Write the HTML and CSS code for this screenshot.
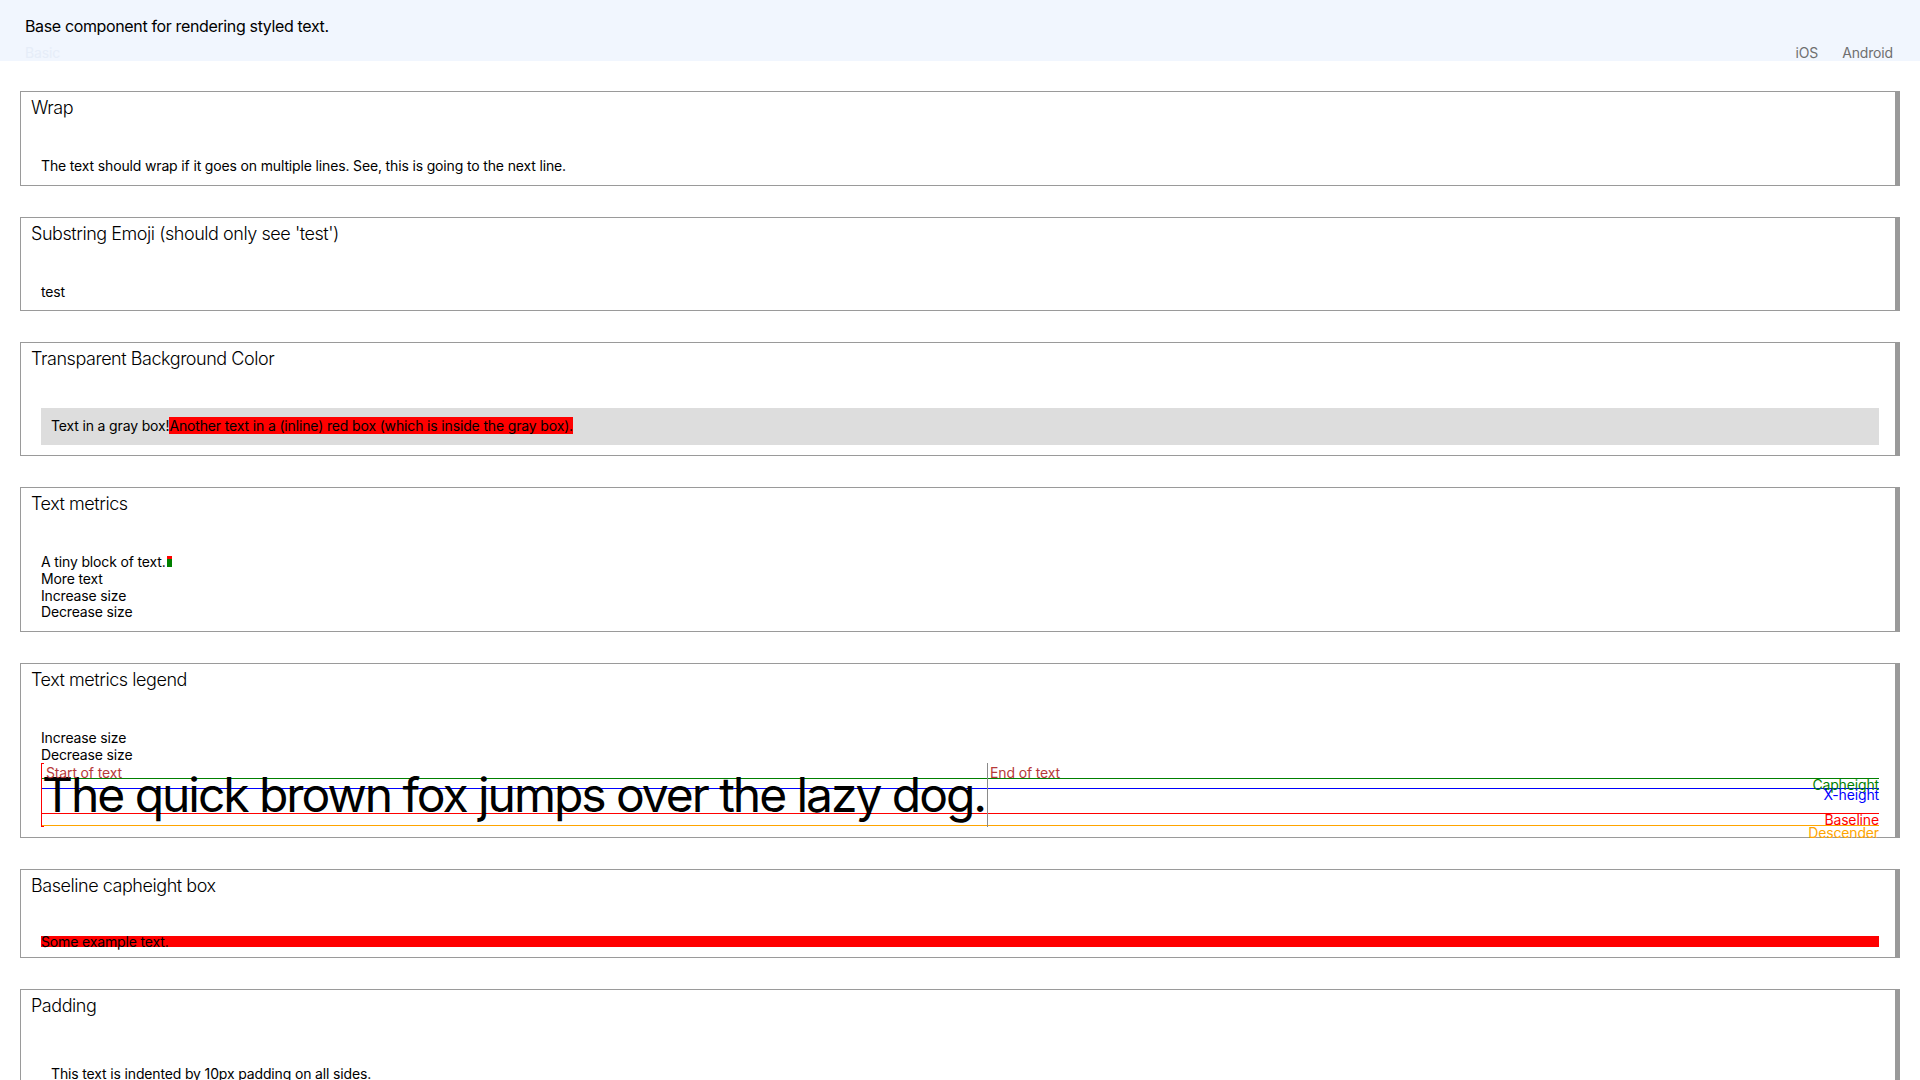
FILE: index.html
```html
<!DOCTYPE html>
<html lang="en">
<head>
<meta charset="utf-8">
<title>Text</title>
<link rel="stylesheet" href="styles.css">
</head>
<body>
<header class="topbar">
  <p class="desc">Base component for rendering styled text.</p>
  <div class="tabs">
    <span class="tab-active">Basic</span>
    <nav class="platforms"><span>iOS</span><span>Android</span></nav>
  </div>
</header>

<main class="examples">
  <section class="card">
    <h2 class="card-title">Wrap</h2>
    <div class="card-body">
      <p class="line">The text should wrap if it goes on multiple lines. See, this is going to the next line.</p>
    </div>
  </section>

  <section class="card">
    <h2 class="card-title">Substring Emoji (should only see 'test')</h2>
    <div class="card-body">
      <p class="line">test</p>
    </div>
  </section>

  <section class="card">
    <h2 class="card-title">Transparent Background Color</h2>
    <div class="card-body card-body-tight">
      <div class="graybox">
        <p class="line">Text in a gray box!<span class="redinline">Another text in a (inline) red box (which is inside the gray box).</span></p>
      </div>
    </div>
  </section>

  <section class="card">
    <h2 class="card-title">Text metrics</h2>
    <div class="card-body">
      <p class="line">A tiny block of text.<span class="marker"></span></p>
      <p class="line">More text</p>
      <p class="line">Increase size</p>
      <p class="line">Decrease size</p>
    </div>
  </section>

  <section class="card">
    <h2 class="card-title">Text metrics legend</h2>
    <div class="card-body">
      <p class="line">Increase size</p>
      <p class="line">Decrease size</p>
      <div class="legend">
        <div class="mline mline-cap"></div>
        <div class="mline mline-x"></div>
        <div class="mline mline-base"></div>
        <div class="mline mline-desc"></div>
        <span class="mlabel mlabel-cap">Capheight</span>
        <span class="mlabel mlabel-x">X-height</span>
        <span class="mlabel mlabel-base">Baseline</span>
        <span class="mlabel mlabel-desc">Descender</span>
        <div class="textbox">
          <span class="start-tick start-tick-top"></span>
          <span class="start-tick start-tick-bottom"></span>
          <span class="edge-label start-label">Start of text</span>
          <span class="edge-label end-label">End of text</span>
          <div class="bigtext">The quick brown fox jumps over the lazy dog.</div>
        </div>
      </div>
    </div>
  </section>

  <section class="card">
    <h2 class="card-title">Baseline capheight box</h2>
    <div class="card-body">
      <div class="capbox"><p class="line capbox-text">Some example text.</p></div>
    </div>
  </section>

  <section class="card">
    <h2 class="card-title">Padding</h2>
    <div class="card-body">
      <p class="line padded">This text is indented by 10px padding on all sides.</p>
    </div>
  </section>
</main>
</body>
</html>
```

FILE: styles.css
```css
html, body {
  margin: 0;
  padding: 0;
  background: #ffffff;
}

body {
  font-family: "Inter", "Noto Sans", "Liberation Sans", sans-serif;
  color: #000000;
}

.topbar {
  height: 61px;
  box-sizing: border-box;
  background: #f1f6fe;
  padding: 17px 27px 0 25px;
}

.desc {
  margin: 0;
  font-size: 16px;
  line-height: 19px;
  letter-spacing: -0.36px;
  color: #000000;
}

.tabs {
  display: flex;
  justify-content: space-between;
  align-items: center;
  margin-top: 8px;
  font-size: 14px;
  line-height: 17px;
  letter-spacing: -0.15px;
}

.tab-active {
  color: #e6edf8;
}

.platforms {
  display: flex;
  gap: 24px;
  color: #6f6f6f;
}

.examples {
  display: flex;
  flex-direction: column;
  gap: 31px;
  padding: 30px 20px 40px 20px;
}

.card {
  border: 1px solid #9a9a9a;
  border-right-width: 5px;
  background: #ffffff;
}

.card-title {
  margin: 0;
  padding: 5px 10px 7px 10px;
  font-size: 18px;
  line-height: 22px;
  font-weight: 300;
  letter-spacing: -0.45px;
  color: #000000;
}

.card-body {
  padding: 32px 16px 10px 20px;
  font-size: 14px;
  line-height: 16.7px;
  letter-spacing: -0.15px;
}

.card-body-tight {
  padding-top: 31px;
}

.line {
  margin: 0;
  font-size: 14px;
  line-height: 16.7px;
}

.graybox {
  background: #dddddd;
  padding: 10px;
}

.redinline {
  background: #ff0000;
}

.marker {
  display: inline-block;
  width: 5px;
  height: 11px;
  margin-left: 1px;
  background: linear-gradient(#ff0000 0 3px, #008000 3px 100%);
  vertical-align: baseline;
}

.legend {
  position: relative;
  height: 63.6px;
}

.mline {
  position: absolute;
  left: 0;
  right: 0;
  height: 1px;
}

.mline-cap { top: 14.5px; background: #008000; }
.mline-x { top: 24.5px; background: #0000ff; }
.mline-base { top: 49.5px; background: #ff0000; }
.mline-desc { top: 62px; background: #ffa500; }

.mlabel {
  position: absolute;
  right: 0;
  font-size: 14px;
  line-height: 16.7px;
}

.mlabel-cap { top: 14px; color: #008000; }
.mlabel-x { top: 24px; color: #0000ff; }
.mlabel-base { top: 49px; color: #ff0000; }
.mlabel-desc { top: 62px; color: #ffa500; }

.textbox {
  position: relative;
  display: inline-block;
  height: 63.6px;
  border-left: 1px solid #ff0000;
  border-right: 1px solid #8a8a8a;
  vertical-align: top;
}

.start-tick {
  position: absolute;
  left: 0;
  width: 2px;
  height: 1px;
  background: #ff0000;
}

.start-tick-top { top: 0; }
.start-tick-bottom { bottom: 0; }

.edge-label {
  position: absolute;
  top: 2px;
  font-size: 14px;
  line-height: 16.7px;
  color: #b73a3a;
  white-space: nowrap;
}

.start-label { left: 4px; }
.end-label { left: calc(100% + 3px); }

.bigtext {
  margin-top: 3px;
  padding-right: 2px;
  font-size: 48px;
  line-height: 58px;
  letter-spacing: -2.05px;
  white-space: nowrap;
  color: #000000;
}

.capbox {
  height: 11px;
  background: #ff0000;
}

.capbox-text {
  position: relative;
  top: -2.4px;
}

.padded {
  padding: 10px;
}
```
